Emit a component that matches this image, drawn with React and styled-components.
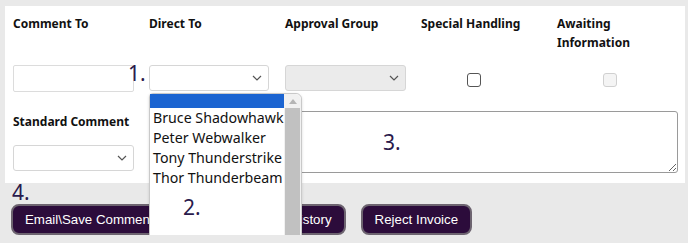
import React from "react";
import styled, { createGlobalStyle } from "styled-components";

const GlobalStyle = createGlobalStyle`
  html, body {
    margin: 0;
    padding: 0;
    overflow: hidden;
    background: #e9e9e9;
  }
`;

const Chevron = () => (
  <svg width="10" height="6" viewBox="0 0 10 6">
    <path d="M1 1l4 4 4-4" fill="none" stroke="#555" strokeWidth="1.2" />
  </svg>
);

const Page = () => {
  const names = [
    "Bruce Shadowhawk",
    "Peter Webwalker",
    "Tony Thunderstrike",
    "Thor Thunderbeam",
  ];

  return (
    <Wrapper>
      <Panel>
        <Grid>
          <Label>Comment To</Label>
          <Label>Direct To</Label>
          <Label>Approval Group</Label>
          <Label>Special Handling</Label>
          <Label>
            Awaiting
            <br />
            Information
          </Label>

          <Cell>
            <TextBox />
          </Cell>
          <Cell>
            <Marker $left={-21} $top={-6}>1.</Marker>
            <SelectBox $width={120}>
              <Chevron />
            </SelectBox>
            <DropList>
              <Option $selected>&nbsp;</Option>
              {names.map((n) => (
                <Option key={n}>{n}</Option>
              ))}
              <Marker $left={33} $top={99}>2.</Marker>
              <ScrollBar>
                <ScrollArrow>
                  <svg width="8" height="5" viewBox="0 0 8 5">
                    <path d="M0 5L4 0L8 5Z" fill="#b5b5b5" />
                  </svg>
                </ScrollArrow>
                <Thumb />
              </ScrollBar>
            </DropList>
          </Cell>
          <Cell>
            <SelectBox $width={121} $disabled>
              <Chevron />
            </SelectBox>
          </Cell>
          <CheckCell>
            <Check />
          </CheckCell>
          <CheckCell>
            <Check $disabled />
          </CheckCell>
        </Grid>

        <Row>
          <Column>
            <Label>Standard Comment</Label>
            <SelectBox $width={121}>
              <Chevron />
            </SelectBox>
          </Column>
          <NoteWrap>
            <Note />
            <Marker $left={234} $top={17}>3.</Marker>
          </NoteWrap>
        </Row>
      </Panel>

      <Step>4.</Step>
      <Buttons>
        <Button>Email\Save Comment</Button>
        <Button>View Comment History</Button>
        <Button>Reject Invoice</Button>
      </Buttons>
    </Wrapper>
  );
};

const Wrapper = styled.div`
  padding: 6px 3px 0 5px;
  font-family: "Noto Sans", "Open Sans", sans-serif;
`;

const Panel = styled.div`
  background: #fff;
  padding: 8px 0 10px 8px;
  height: 159px;
`;

const Grid = styled.div`
  display: grid;
  grid-template-columns: repeat(5, 136px);
  grid-template-rows: 51px 28px;
`;

const Label = styled.div`
  font-size: 12px;
  font-weight: 700;
  color: #111;
  line-height: 19px;
`;

const Cell = styled.div`
  position: relative;
`;

const CheckCell = styled.div`
  display: flex;
  justify-content: center;
  padding-top: 8px;
  padding-right: 31px;
`;

const TextBox = styled.div`
  width: 121px;
  height: 27px;
  box-sizing: border-box;
  border: 1px solid #dcdcdc;
  border-radius: 2px;
`;

const SelectBox = styled.div`
  width: ${(p) => p.$width}px;
  height: 26px;
  box-sizing: border-box;
  border: 1px solid #d6d6d6;
  border-radius: 3px;
  background: ${(p) => (p.$disabled ? "#ebebeb" : "#fff")};
  display: flex;
  align-items: center;
  justify-content: flex-end;
  padding-right: 6px;
`;

const Check = styled.div`
  width: 14px;
  height: 14px;
  box-sizing: border-box;
  border-radius: 3px;
  border: 1px solid ${(p) => (p.$disabled ? "#d0d0d0" : "#555")};
  background: ${(p) => (p.$disabled ? "#f4f4f4" : "#fff")};
`;

const Marker = styled.div`
  position: absolute;
  left: ${(p) => p.$left}px;
  top: ${(p) => p.$top}px;
  font-family: "Noto Sans", sans-serif;
  font-size: 21px;
  line-height: 28px;
  color: #2a1a4c;
  z-index: 3;
`;

const DropList = styled.div`
  position: absolute;
  left: 0;
  top: 28px;
  width: 153px;
  height: 170px;
  box-sizing: border-box;
  background: #fff;
  border: 1px solid #c9c9c9;
  border-radius: 4px 6px 0 0;
  padding-right: 17px;
  z-index: 2;
  box-shadow: 0 1px 3px rgba(0, 0, 0, 0.15);
`;

const Option = styled.div`
  font-family: "Noto Sans", sans-serif;
  font-size: 14.2px;
  line-height: 20px;
  height: ${(p) => (p.$selected ? "14px" : "20px")};
  padding-left: 3px;
  white-space: nowrap;
  color: #111;
  background: ${(p) => (p.$selected ? "#1b64d1" : "transparent")};
`;

const ScrollBar = styled.div`
  position: absolute;
  right: 0;
  top: 0;
  bottom: 0;
  width: 17px;
  background: #f1f1f1;
  display: flex;
  flex-direction: column;
  border-radius: 0 6px 0 0;
`;

const ScrollArrow = styled.div`
  height: 14px;
  display: flex;
  justify-content: center;
  align-items: center;
`;

const Thumb = styled.div`
  flex: 1;
  margin: 0 1px;
  background: #c1c1c1;
`;

const Row = styled.div`
  display: flex;
  margin-top: 18px;
`;

const Column = styled.div`
  width: 136px;
  display: flex;
  flex-direction: column;
  padding-top: 1px;
  gap: 14px;
`;

const NoteWrap = styled.div`
  position: relative;
`;

const Note = styled.textarea`
  display: block;
  width: 529px;
  height: 62px;
  box-sizing: border-box;
  border: 1px solid #9a9a9a;
  border-radius: 3px;
  margin: 0;
`;

const Step = styled.div`
  font-family: "Noto Sans", sans-serif;
  font-size: 21px;
  line-height: 18px;
  color: #2a1a4c;
  padding-left: 7px;
  height: 21px;
`;

const Buttons = styled.div`
  display: flex;
  gap: 15px;
  padding-left: 6px;
`;

const Button = styled.button`
  height: 31px;
  padding: 0 12px;
  border-radius: 8px;
  border: 2px solid #6d6470;
  background: #2c0c3b;
  color: #fff;
  font-family: "Liberation Sans", Arial, sans-serif;
  font-size: 13.3px;
`;

export default function App() {
  return (
    <>
      <GlobalStyle />
      <Page />
    </>
  );
}
